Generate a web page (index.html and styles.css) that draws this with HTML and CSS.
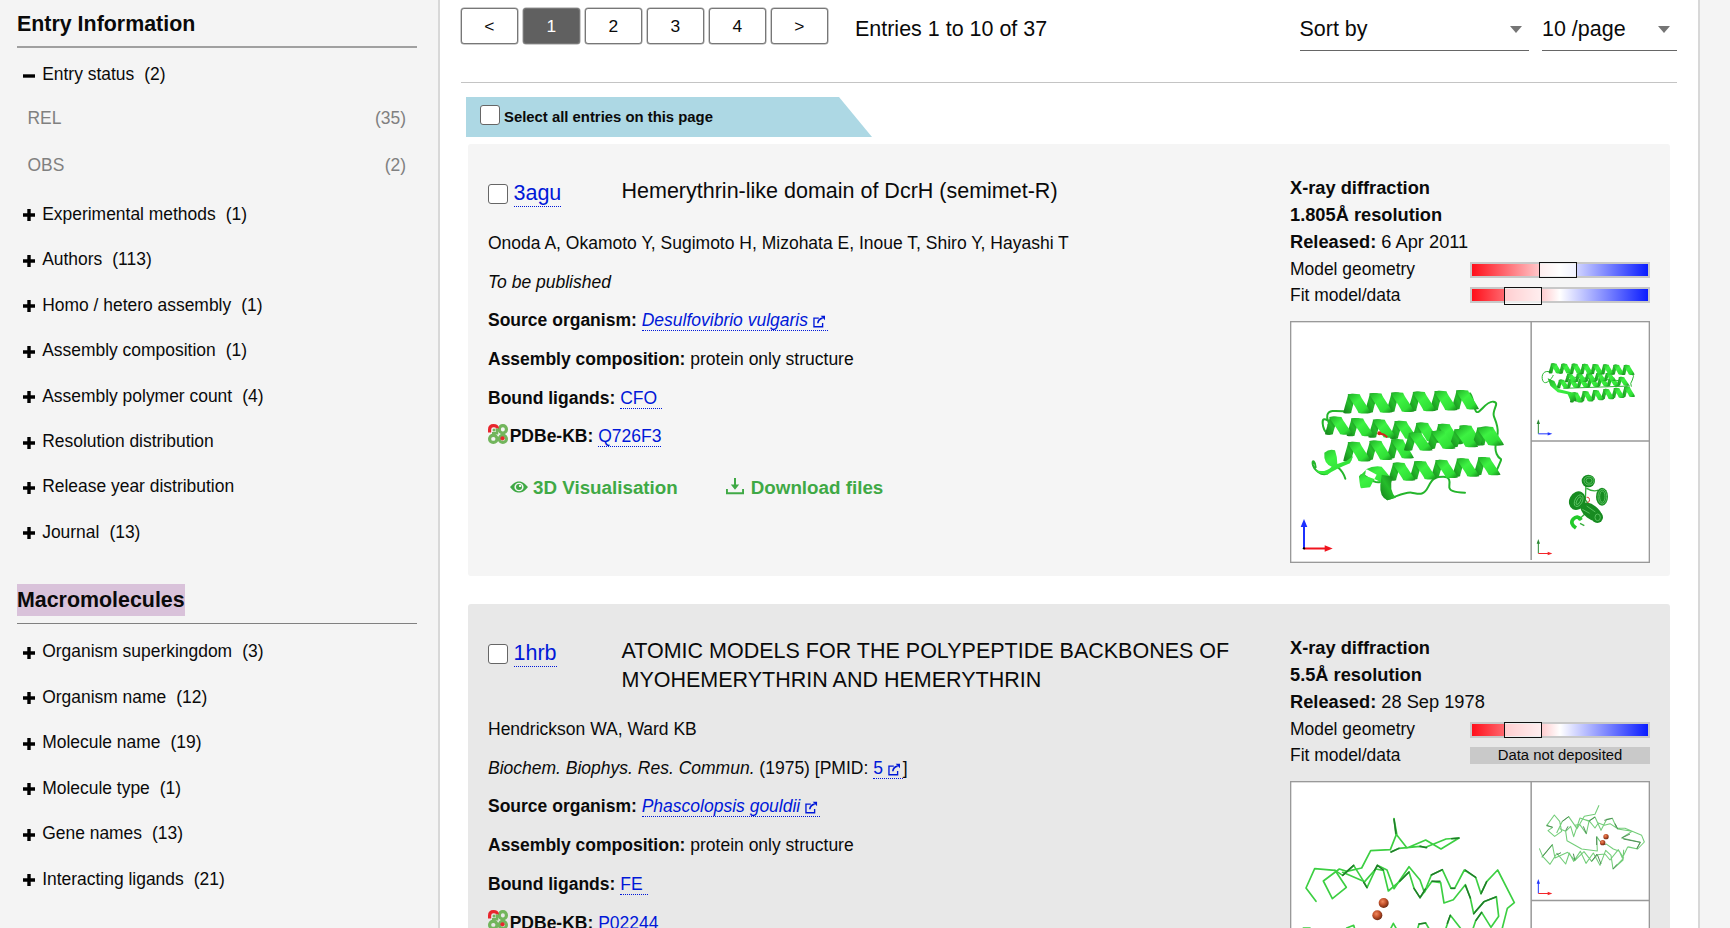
FILE: index.html
```html
<!DOCTYPE html>
<html lang="en">
<head>
<meta charset="utf-8">
<title>PDBe search results</title>
<link rel="stylesheet" href="styles.css">
</head>
<body>
<svg class="defs" aria-hidden="true">
  <defs>
    <linearGradient id="ribbon" x1="0" y1="0" x2="1" y2="1">
      <stop offset="0" stop-color="#1fae26"/><stop offset=".4" stop-color="#3df242"/><stop offset=".75" stop-color="#30e036"/><stop offset="1" stop-color="#15851b"/>
    </linearGradient>
    <linearGradient id="ribbonBack" x1="0" y1="1" x2="1" y2="0">
      <stop offset="0" stop-color="#157f1b"/><stop offset=".5" stop-color="#25bd2b"/><stop offset="1" stop-color="#147519"/>
    </linearGradient>
    <radialGradient id="iron" cx=".4" cy=".35" r=".65">
      <stop offset="0" stop-color="#f08a60"/><stop offset=".5" stop-color="#c4522b"/><stop offset="1" stop-color="#6d2912"/>
    </radialGradient>
    <symbol id="plus" viewBox="0 0 12 12"><path d="M4.3 0h3.4v4.3H12v3.4H7.700V12H4.300V7.700H0V4.300h4.300z"/></symbol>
    <symbol id="minus" viewBox="0 0 12 12"><path d="M0 4.300h12v3.400H0z"/></symbol>
    <symbol id="ext" viewBox="0 0 13 13"><path d="M6 3H1v9h9V8" fill="none" stroke="currentColor" stroke-width="1.400"/><path d="M5 8.300C5.300 5.500 7 3.700 10 3" fill="none" stroke="currentColor" stroke-width="1.700"/><path d="M8 .6h4.600v4.600z" fill="currentColor"/></symbol>
    <symbol id="kb" viewBox="0 0 20 20">
      <g fill="none" stroke="#72b55c" stroke-width="3.200"><rect x="11.300" y="1.600" width="7.100" height="7.400" rx="3.500"/><rect x="1.600" y="11.300" width="7.400" height="7.100" rx="3.500"/><rect x="11.300" y="11.300" width="7.100" height="7.100" rx="3.500"/></g>
      <path d="M1.600 8.500V5.500Q1.600 1.600 5.500 1.600T9.300 4.500" fill="none" stroke="#e8262d" stroke-width="3.200"/>
      <path d="M9 4.500v4.700H4" fill="none" stroke="#72b55c" stroke-width="2.600"/>
      <circle cx="6" cy="6" r="1.500" fill="#72b55c"/><circle cx="14.500" cy="14.300" r="2.100" fill="#e8262d"/>
    </symbol>
    <symbol id="eye" viewBox="0 0 18 12"><path fill="currentColor" fill-rule="evenodd" d="M0 6C3.500 1.700 6 .4 9 .4S14.500 1.700 18 6c-3.500 4.300-6 5.600-9 5.600S3.500 10.300 0 6zM4.400 6a4.600 4.300 0 1 0 9.200 0a4.600 4.300 0 1 0-9.200 0z"/><circle cx="9" cy="6" r="3" fill="currentColor"/><circle cx="10.100" cy="4.900" r="1.200" fill="#f5f5f5"/></symbol>
    <symbol id="download" viewBox="0 0 18 17"><path fill="currentColor" d="M8 0h2v6.500h3.200L9 11.800 4.800 6.500H8zM0 11h1.900v3.200h14.200V11H18v5.200H0z"/></symbol>
  </defs>
</svg>

<div class="page">
  <aside class="sidebar">
    <h2 class="facet-title">Entry Information</h2>
    <ul class="facets">
      <li class="facet"><svg class="toggle"><use href="#minus"/></svg>Entry status<span class="count">(2)</span></li>
      <li class="option option-first"><span>REL</span><span>(35)</span></li>
      <li class="option"><span>OBS</span><span>(2)</span></li>
      <li class="facet"><svg class="toggle"><use href="#plus"/></svg>Experimental methods<span class="count">(1)</span></li>
      <li class="facet"><svg class="toggle"><use href="#plus"/></svg>Authors<span class="count">(113)</span></li>
      <li class="facet"><svg class="toggle"><use href="#plus"/></svg>Homo / hetero assembly<span class="count">(1)</span></li>
      <li class="facet"><svg class="toggle"><use href="#plus"/></svg>Assembly composition<span class="count">(1)</span></li>
      <li class="facet"><svg class="toggle"><use href="#plus"/></svg>Assembly polymer count<span class="count">(4)</span></li>
      <li class="facet"><svg class="toggle"><use href="#plus"/></svg>Resolution distribution</li>
      <li class="facet"><svg class="toggle"><use href="#plus"/></svg>Release year distribution</li>
      <li class="facet"><svg class="toggle"><use href="#plus"/></svg>Journal<span class="count">(13)</span></li>
    </ul>
    <h2 class="facet-title facet-title-second"><span class="highlight">Macromolecules</span></h2>
    <ul class="facets">
      <li class="facet"><svg class="toggle"><use href="#plus"/></svg>Organism superkingdom<span class="count">(3)</span></li>
      <li class="facet"><svg class="toggle"><use href="#plus"/></svg>Organism name<span class="count">(12)</span></li>
      <li class="facet"><svg class="toggle"><use href="#plus"/></svg>Molecule name<span class="count">(19)</span></li>
      <li class="facet"><svg class="toggle"><use href="#plus"/></svg>Molecule type<span class="count">(1)</span></li>
      <li class="facet"><svg class="toggle"><use href="#plus"/></svg>Gene names<span class="count">(13)</span></li>
      <li class="facet"><svg class="toggle"><use href="#plus"/></svg>Interacting ligands<span class="count">(21)</span></li>
    </ul>
  </aside>

  <main class="results">
    <div class="toolbar">
      <nav class="pager">
        <button class="page-btn">&lt;</button><button class="page-btn current">1</button><button class="page-btn">2</button><button class="page-btn">3</button><button class="page-btn">4</button><button class="page-btn">&gt;</button>
      </nav>
      <span class="range">Entries 1 to 10 of 37</span>
      <div class="select sort">Sort by<i class="caret"></i></div>
      <div class="select size">10 /page<i class="caret"></i></div>
    </div>

    <div class="select-all"><span class="box"></span>Select all entries on this page</div>

    <article class="card">
      <div class="info">
        <div class="head"><span class="box"></span><a class="entry-id">3agu</a><h3 class="title">Hemerythrin-like domain of DcrH (semimet-R)</h3></div>
        <p>Onoda A, Okamoto Y, Sugimoto H, Mizohata E, Inoue T, Shiro Y, Hayashi T</p>
        <p><i>To be published</i></p>
        <p><b>Source organism:</b> <a><i>Desulfovibrio vulgaris</i> <svg class="ext"><use href="#ext"/></svg></a></p>
        <p><b>Assembly composition:</b> protein only structure</p>
        <p><b>Bound ligands:</b> <a class="ligand">CFO</a></p>
        <p class="kb-line"><svg class="kb"><use href="#kb"/></svg><span><b>PDBe-KB:</b> <a>Q726F3</a></span></p>
        <div class="actions">
          <a class="action"><svg class="eye"><use href="#eye"/></svg>3D Visualisation</a>
          <a class="action"><svg class="download"><use href="#download"/></svg>Download files</a>
        </div>
      </div>
      <div class="summary">
        <div class="fact"><b>X-ray diffraction</b></div>
        <div class="fact"><b>1.805Å resolution</b></div>
        <div class="fact"><b>Released:</b> 6 Apr 2011</div>
        <div class="quality first-quality">Model geometry<div class="bar"><span class="range-box" style="left:67px"></span></div></div>
        <div class="quality">Fit model/data<div class="bar"><span class="range-box tall" style="left:32px"></span></div></div>
        <svg class="structure" viewBox="30 33 1080 726">
          <rect x="32" y="35" width="1076" height="722" fill="#fff" stroke="#999" stroke-width="4"/>
          <path d="M753.500 34v716M753 393h355" stroke="#999" stroke-width="4.500" fill="none"/>
          <g fill="none" stroke="#24b52b" stroke-width="6" stroke-linecap="round" stroke-linejoin="round">
            <path d="M192 304C165 302 146 300 142 315S152 338 145 345M148 372C128 368 124 330 132 328S150 340 156 330M570 250C584 270 580 300 590 306S618 272 640 275S634 300 642 320S655 350 653 370S640 410 650 432S668 440 660 458S650 486 642 490M142 490C125 500 100 478 98 462S106 455 107 472M172 470Q190 485 196 506M240 500C250 480 275 525 300 516M322 568C350 560 375 545 395 548S430 560 445 530S470 500 490 500S510 515 508 528S520 548 555 548"/>
          </g>
          <g class="helices" data-helices="135,347,395,364,4,26;395,366,655,382,4,27;190,425,385,412,3,28;372,395,645,374,4,26;190,281,580,267,6,28;325,485,645,464,5,26"></g>
          <path d="M133 428Q148 415 165 421Q172 440 172 462L200 452L220 438L210 460Q165 478 142 494Q120 494 105 480Q135 490 155 470Q130 460 133 428z" fill="url(#ribbon)"/>
          <path d="M237 500Q240 535 244 535L270 532L290 494L260 478zM258 478Q280 466 305 470L330 500L315 524Q285 505 255 498z" fill="url(#ribbon)"/>
          <path d="M305 494L338 500Q325 540 348 563L322 571Q298 560 301 525z" fill="url(#ribbonBack)"/>
          <path d="M298 370l14 4 10 8" stroke="#d3281c" stroke-width="6" fill="none"/><circle cx="298" cy="370" r="6" fill="#d3281c"/>
          <path d="M72 716V645" stroke="#1c31ff" stroke-width="6"/><path d="M72 627l10 24H62z" fill="#1c31ff"/>
          <path d="M72 715.500h70" stroke="#f0141e" stroke-width="6"/><path d="M158 715.500l-24 10v-20z" fill="#f0141e"/><circle cx="72" cy="715" r="3.500"/>
          <path d="M808 185C785 180 783 205 790 215S815 208 820 195M1055 185q10 15 2 25t-3 20M860 200L1020 212M850 235L1050 228" stroke="#2bb832" stroke-width="3" fill="none"/>
          <g class="helices" data-helices="830,222,1040,212,7,12;855,204,1000,200,5,11;806,175,1056,180,8,14;870,262,1057,242,6,14"></g>
          <path d="M803 205l20 8 12 24 48 12 8 26-20-4-8-18-30-6-22-20z" fill="url(#ribbon)"/>
          <path d="M775 371v-34" stroke="#2c8a34" stroke-width="3"/><path d="M775 328l5 14h-10z" fill="#2c8a34"/><path d="M775 371.500h34" stroke="#2338ff" stroke-width="3"/><path d="M817 371.500l-14 5v-10z" fill="#2338ff"/>
          <path d="M918 520l-2 50 25 30M920 535q20 12 35 5M895 630l22-20M900 640l13 7" stroke="#36ad3c" stroke-width="4" fill="none"/>
          <g fill="#178b21">
            <ellipse cx="925" cy="513" rx="20" ry="19"/><ellipse cx="966" cy="560" rx="18" ry="27"/><ellipse cx="892" cy="572" rx="24" ry="29" transform="rotate(28 892 572)"/><ellipse cx="934" cy="606" rx="38" ry="21" transform="rotate(38 934 606)"/><circle cx="952" cy="622" r="17"/>
          </g>
          <g fill="none" stroke="#62c868" stroke-width="2.500">
            <ellipse cx="927" cy="512" rx="9" ry="8"/><ellipse cx="927" cy="512" rx="15" ry="13"/><ellipse cx="967" cy="560" rx="8" ry="17"/><ellipse cx="967" cy="560" rx="13" ry="22"/><ellipse cx="896" cy="572" rx="11" ry="19" transform="rotate(28 896 572)"/><ellipse cx="896" cy="572" rx="5" ry="13" transform="rotate(28 896 572)"/><ellipse cx="953" cy="622" rx="8" ry="10"/><path d="M907 598l22 12M920 588l26 18"/>
          </g>
          <path d="M888 654Q868 640 880 627T904 630" fill="none" stroke="#22ca2a" stroke-width="11"/>
          <path d="M920 562q10-2 8 12l-6 4" fill="none" stroke="#df3a35" stroke-width="3"/>
          <path d="M775 730v-34" stroke="#2c8a34" stroke-width="3"/><path d="M775 687l5 14h-10z" fill="#2c8a34"/><path d="M775 730.500h34" stroke="#f3262a" stroke-width="3"/><path d="M817 730.500l-14 5v-10z" fill="#f3262a"/>
        </svg>
      </div>
    </article>

    <article class="card alt">
      <div class="info">
        <div class="head"><span class="box"></span><a class="entry-id">1hrb</a><h3 class="title">ATOMIC MODELS FOR THE POLYPEPTIDE BACKBONES OF MYOHEMERYTHRIN AND HEMERYTHRIN</h3></div>
        <p>Hendrickson WA, Ward KB</p>
        <p><i>Biochem. Biophys. Res. Commun.</i> (1975) [PMID: <a>5 <svg class="ext"><use href="#ext"/></svg></a>]</p>
        <p><b>Source organism:</b> <a><i>Phascolopsis gouldii</i> <svg class="ext"><use href="#ext"/></svg></a></p>
        <p><b>Assembly composition:</b> protein only structure</p>
        <p><b>Bound ligands:</b> <a class="ligand">FE</a></p>
        <p class="kb-line"><svg class="kb"><use href="#kb"/></svg><span><b>PDBe-KB:</b> <a>P02244</a></span></p>
      </div>
      <div class="summary">
        <div class="fact"><b>X-ray diffraction</b></div>
        <div class="fact"><b>5.5Å resolution</b></div>
        <div class="fact"><b>Released:</b> 28 Sep 1978</div>
        <div class="quality first-quality">Model geometry<div class="bar"><span class="range-box" style="left:32px"></span></div></div>
        <div class="quality">Fit model/data<div class="no-data">Data not deposited</div></div>
        <svg class="structure" viewBox="15 9 1080 726">
          <rect x="17" y="11" width="1076" height="722" fill="#fff" stroke="#999" stroke-width="4"/>
          <path d="M738.500 10v716M738 367.500h355" stroke="#999" stroke-width="4.500" fill="none"/>
          <g fill="none" stroke="#3ccf42" stroke-width="5" stroke-linejoin="round" stroke-linecap="round">
            <path d="M93 370L63 330 89 272 150 277 184 328 142 362 115 309 163 273 185 280 230 270 257 218 316 215 333 172 327 122 336 172 366 210 422 186 468 213 522 180 483 183 422 208 405 205 342 211 318 222"/>
            <path d="M150 277L173 292 206 262 236 310 246 329 277 262 306 276 327 332 372 266 405 306 418 343 439 291 472 275 498 331 509 331 538 276 572 298 588 347 605 311 638 276 688 374 667 391 652 450"/>
            <path d="M173 283L239 311 272 273 295 277 310 339 344 310 372 282 387 331 405 359 441 310 467 314 477 375 505 365 541 320 556 360 566 407 597 371 634 356 641 415 618 448 590 403 572 428 563 455M482 453L496 412 526 450M55 450h20M185 450L206 442 209 452M317 452L325 436 334 452M398 452L402 438 422 435 432 452"/>
          </g>
          <g fill="none" stroke="#207b2a" stroke-width="4.500" stroke-linecap="round">
            <path d="M327 124l6 42M318 222l24-11M405 205l20 4M500 182l22-2M173 292l33-30M236 313l10 16M268 278l9-16 18 14M372 282l-28 28M387 331l18 28 16-26M439 291l33-16M441 310h24M498 331h11M541 276l31 22M588 347l17-36M566 407l31-36 36-14M541 322l15 38M590 403l-17 24M496 412l-9 24M402 438l20-3"/>
          </g>
          <circle cx="296" cy="375" r="15" fill="url(#iron)"/><circle cx="277" cy="412" r="15" fill="url(#iron)"/>
          <g fill="none" stroke="#73cd79" stroke-width="3.200" stroke-linejoin="round">
            <path d="M942 82L930 109 898 115 876 152 851 116 832 130 815 165M803 148L785 143 808 111 824 130 830 160 809 175 789 158 803 148M824 152L842 160 846 188 890 213 937 219 935 176 945 190M842 160L857 145 866 176 885 120 912 130 904 167 884 139 870 142M890 122L912 128 930 117 948 157 965 124 982 121 995 150 975 137 958 142 940 135 930 150 912 128M990 137L998 153 1041 160 1010 180M998 151L1020 151 1070 172 1078 192 1058 213 1028 207 1012 240 1003 220 985 213 962 197M1010 180L1066 193 1055 212 1030 206M1016 215L1014 246 984 273 978 232 962 217 945 262 925 225 903 256 886 220 866 250 853 225 842 258 816 226 795 259 773 235 763 211M770 238L802 200 810 240 848 223 870 247 897 221 920 250 937 230 960 228 975 246 1000 215 1016 240 984 273"/>
          </g>
          <path d="M803 148l-18-6M832 130l19-14M895 145l9 22M912 130l18-13M958 127l24-6M990 137l8 16M1010 180l25-12M1015 183l51 10M1066 193l-11 20M773 235l29-35M816 230l12-6M870 247l-5-20M920 250l16-22M937 230l11 28M984 273l12-14M935 176v25M945 190l17 10M842 158l7-13" fill="none" stroke="#528c58" stroke-width="3"/>
          <circle cx="963" cy="176" r="8" fill="url(#iron)"/><circle cx="953" cy="194" r="8" fill="url(#iron)"/>
          <path d="M760 346v-34" stroke="#2338ff" stroke-width="3"/><path d="M760 303l5 14h-10z" fill="#2338ff"/><path d="M760 346.500h34" stroke="#f3262a" stroke-width="3"/><path d="M802 346.500l-14 5v-10z" fill="#f3262a"/>
        </svg>
      </div>
    </article>
  </main>
</div>
<script src="helices.js"></script>
</body>
</html>
```
FILE: styles.css
```css
* { box-sizing: border-box; }
html, body { height: 100%; }
body {
  margin: 0;
  overflow: hidden;
  background: #f4f4f4;
  color: #0a0a0a;
  font-family: "Liberation Sans", Arial, sans-serif;
  font-size: 17.45px;
}
.defs { position: absolute; width: 0; height: 0; }
.page { display: flex; width: 1730px; height: 928px; overflow: hidden; }

/* Sidebar */
.sidebar { flex: none; width: 438px; padding: 7.6px 21px 0 17px; }
.facet-title {
  height: 40.4px;
  margin: 0;
  border-bottom: 2px solid #a0a0a0;
  font-size: 21.4px;
  line-height: 32px;
}
.facet-title-second { height: 39.8px; margin-top: 29.3px; border-bottom: 1px solid #808080; }
.highlight { display: inline-block; background: #d9c2da; }
.facets { margin: 0; padding: 4.1px 0 0; list-style: none; }
.facet-title-second + .facets { padding-top: 4.900px; }
.facet { display: flex; align-items: center; height: 45.47px; padding-left: 6px; white-space: nowrap; }
.toggle { width: 12px; height: 12px; margin: 2px 7.2px 0 0; }
.count { margin-left: 10px; }
.option {
  display: flex;
  align-items: center;
  justify-content: space-between;
  height: 51.6px;
  padding: 0 11px 0 10.500px;
  color: #808080;
}
.option-first { height: 42.300px; }

/* Results */
.results {
  flex: none;
  width: 1262px;
  height: 928px;
  padding: 7.5px 21px 0 21px;
  background: #fff;
  border: solid #d8d8d8;
  border-width: 0 2px;
}
.toolbar { display: flex; height: 75.5px; border-bottom: 1px solid #c4c4c4; font-size: 21.480px; }
.pager { display: flex; gap: 5.5px; }
.page-btn {
  width: 56.5px;
  height: 36.5px;
  padding: 1px 0 0;
  background: #fff;
  border: 1px solid #777;
  border-radius: 3px;
  box-shadow: 0 0 0 .5px #999;
  color: #0a0a0a;
  font: 17.4px "Liberation Sans", Arial, sans-serif;
}
.page-btn.current { background: #606060; color: #fff; }
.range { margin-left: 27.500px; line-height: 43px; }
.select {
  display: flex;
  align-items: center;
  justify-content: space-between;
  height: 43.500px;
  padding: 1px 7px 0 0;
  border-bottom: 1px solid #666;
}
.sort { width: 229px; margin-left: auto; }
.size { width: 135px; margin-left: 13.500px; }
.caret { border: solid transparent; border-width: 7px 6.500px 0; border-top-color: #757575; }

.box { flex: none; width: 20px; height: 20px; background: #fff; border: 1.500px solid #666; border-radius: 3px; }
.select-all {
  display: flex;
  align-items: flex-start;
  width: 406px;
  height: 40px;
  margin: 14px 0 7px 5px;
  padding: 8px 0 0 13.500px;
  background: #add8e4;
  clip-path: polygon(0 0, 373px 0, 100% 100%, 0 100%);
  font-size: 14.870px;
  font-weight: bold;
  line-height: 24px;
}
.select-all .box { margin-right: 4.500px; }

.card {
  display: flex;
  justify-content: space-between;
  width: 1202px;
  height: 432px;
  margin: 0 0 28px 7px;
  padding: 0 20px;
  background: #f5f5f5;
  border-radius: 3px;
}
.card.alt { background: #e8e8e8; }
.info { width: 770px; padding-top: 32.800px; }
.head { display: flex; align-items: flex-start; min-height: 31.200px; margin: 0 0 21.900px -.500px; font-size: 21.510px; line-height: 28.700px; }
.head .box { margin: 7.600px 6px 0 0; }
.entry-id { flex: none; margin-top: 4.200px; line-height: 25px; }
.title { width: 625px; margin: 0 11.500px 0 auto; font-size: inherit; font-weight: normal; }
.info p { margin: 0 0 12.700px; height: 26px; font-size: 17.500px; line-height: 26px; white-space: nowrap; }
a { color: #0018d8; border-bottom: 1px dotted #0018d8; }
.ligand { padding-right: 5px; }
.ext { width: 12.500px; height: 13px; margin-right: 2.500px; vertical-align: -2px; }
.kb-line { display: flex; align-items: center; }
.kb { width: 20px; height: 20px; margin: -5px 1.700px 0 0; }
.actions { display: flex; gap: 48.500px; margin: 25.600px 0 0 21.500px; font-size: 18.800px; font-weight: bold; line-height: 26px; }
.action { display: flex; align-items: center; border: 0; color: #3fa945; }
.eye { width: 18px; height: 12px; margin: -2px 5.500px 0 0; }
.download { width: 18px; height: 17px; margin: -3px 6.500px 0 0; }

/* Experiment summary */
.summary { flex: none; width: 360px; padding-top: 31px; }
.fact { height: 26.900px; font-size: 18.250px; line-height: 26.900px; }
.quality { display: flex; align-items: center; justify-content: space-between; height: 25.300px; }
.first-quality { margin-top: 1.500px; }
.bar {
  position: relative;
  width: 180px;
  height: 16px;
  border: 2px solid #c8c8c8;
  background: linear-gradient(to right, #ff0f1a, #fff 50%, #0a1cff);
}
.range-box { position: absolute; top: -2px; width: 38px; height: 16px; border: 1px solid #111; background: rgba(255,255,255,.68); }
.range-box.tall { height: 18px; }
.no-data { width: 180px; height: 17px; background: #c9c9c9; font-size: 14.850px; line-height: 17px; text-align: center; }
.structure { display: block; width: 360px; height: 242px; margin-top: 13.200px; }
```
FILE: helices.js
```js
// Draws side-view ribbon helices. Each entry is x1,y1,x2,y2,turns,amplitude.
const NS = "http://www.w3.org/2000/svg";

function band(group, x, y, dx, dy, width, fill) {
  const path = document.createElementNS(NS, "path");
  const cx = dx * 0.1;
  path.setAttribute("d",
    `M${x} ${y} q${width / 2} ${-Math.sign(dy) * 3} ${width} 0 ` +
    `C${x + width + cx} ${y + dy * 0.2} ${x + width + dx - cx} ${y + dy * 0.8} ${x + width + dx} ${y + dy} ` +
    `q${-width / 2} ${Math.sign(dy) * 3} ${-width} 0 ` +
    `C${x + dx - cx} ${y + dy * 0.8} ${x + cx} ${y + dy * 0.2} ${x} ${y}z`);
  path.setAttribute("fill", fill);
  group.appendChild(path);
}

document.querySelectorAll(".helices").forEach(group => {
  group.dataset.helices.split(";").forEach(entry => {
    const [x1, y1, x2, y2, turns, amp] = entry.split(",").map(Number);
    const pitch = (x2 - x1) / turns;
    const width = pitch * 0.56;
    const rise = (y2 - y1) / turns;
    for (let i = 0; i < turns; i++) {
      const x = x1 + i * pitch;
      const y = y1 + i * rise;
      band(group, x, y + amp, pitch * 0.22, -2 * amp, width * 0.65, "url(#ribbonBack)");
    }
    for (let i = 0; i < turns; i++) {
      const x = x1 + i * pitch + pitch * 0.2;
      const y = y1 + i * rise;
      band(group, x, y - amp, pitch * 0.5, 2 * amp, width, "url(#ribbon)");
    }
  });
});
```
